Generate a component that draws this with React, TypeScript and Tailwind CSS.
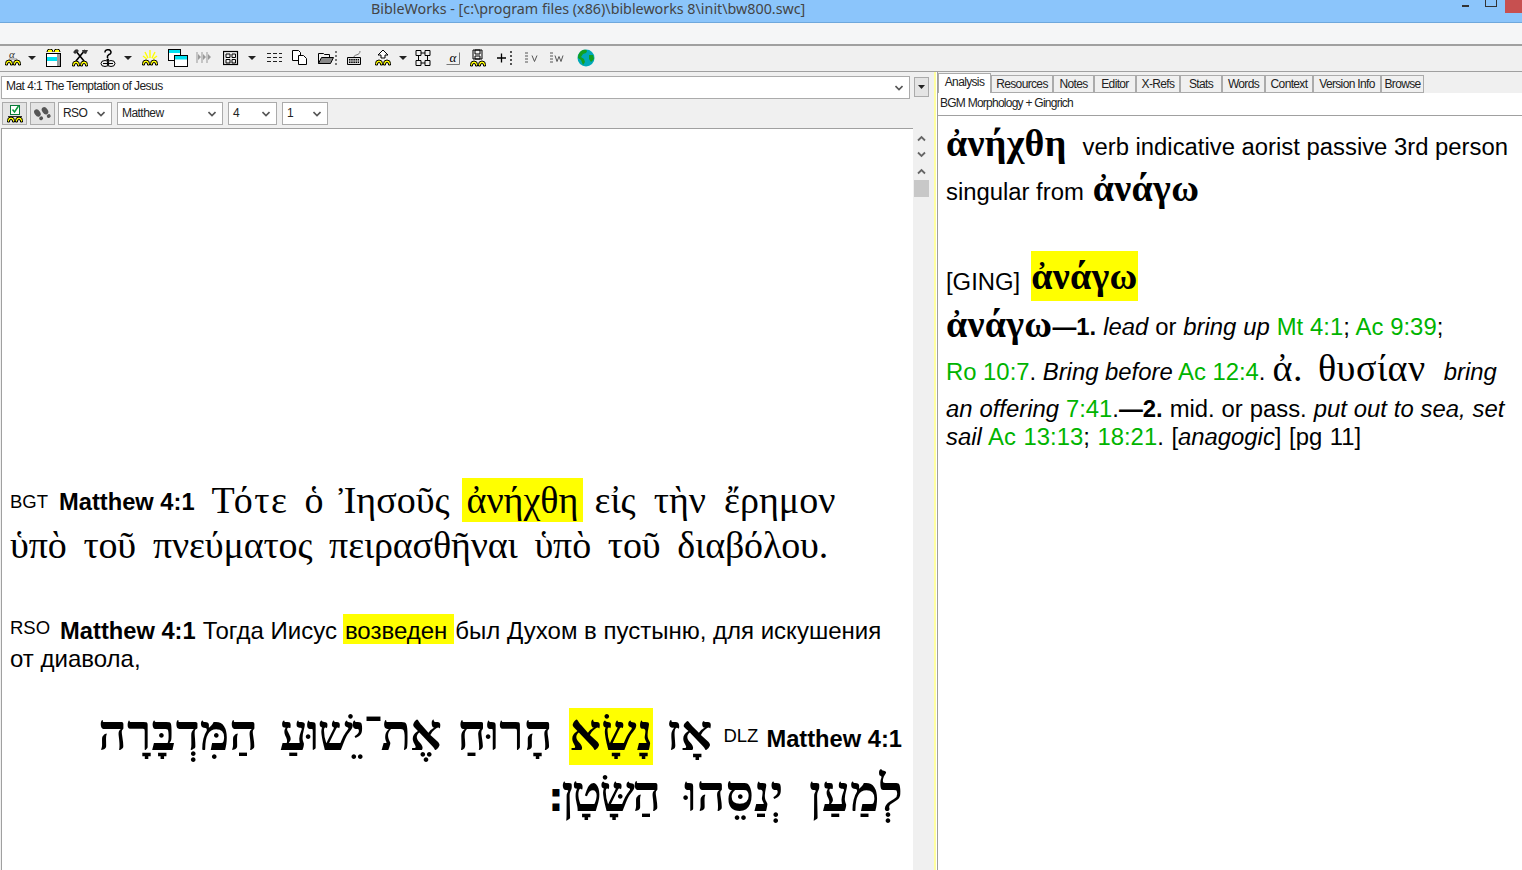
import type { ReactNode } from 'react'

const serif = '"Liberation Serif", "DejaVu Serif", serif'

function Gk({ children, className = '' }: { children: ReactNode; className?: string }) {
  return <span className={`font-['Liberation_Serif',serif] not-italic ${className}`}>{children}</span>
}

function Ref({ children }: { children: ReactNode }) {
  return <span className="text-[#00b400] not-italic">{children}</span>
}

function Arcs({ y = 11, x = 0 }: { y?: number; x?: number }) {
  return (
    <g transform={`translate(${x} ${y})`} fill="#ffff00" stroke="#000" strokeWidth="1">
      <path d="M.5 5V3.500a3 3 0 0 1 7 0V5h-2V4a1 1 0 0 0-3 0v1z" />
      <path d="M8.500 5V3.500a3 3 0 0 1 7 0V5h-2V4a1 1 0 0 0-3 0v1z" />
    </g>
  )
}

function Ico({ w = 16, ml, children }: { w?: number; ml: string; children: ReactNode }) {
  return (
    <svg width={w} height="18" viewBox={`0 0 ${w} 18`} className={`shrink-0 ${ml}`} fill="none" stroke="#000" strokeWidth="1">
      {children}
    </svg>
  )
}

function Caret({ ml }: { ml: string }) {
  return (
    <svg width="8" height="4" viewBox="0 0 8 4" className={`shrink-0 ${ml}`}>
      <path d="M0 0h8L4 4z" fill="#222" />
    </svg>
  )
}

function Toolbar() {
  return (
    <div className="h-[26px] shrink-0 bg-[#f0f0f0] border-b border-[#a0a0a0] flex items-center pb-[2px]">
      <Ico ml="ml-[5px]">
        <text x="4" y="9" fontSize="11" fontStyle="italic" fontFamily={serif} fill="#333" stroke="none">α</text>
        <path d="M4 10h8" stroke="#666" strokeWidth=".7" />
        <Arcs />
      </Ico>
      <Caret ml="ml-[7px]" />
      <Ico ml="ml-[10px]">
        <path d="M1 3a2.500 2.500 0 0 1 6 0M8 3a2.500 2.500 0 0 1 6 0" fill="#ffff00" />
        <rect x=".5" y="4.500" width="14" height="13" fill="#fff" />
        <rect x="1" y="8" width="10" height="4" fill="#00e0f0" stroke="none" />
        <rect x="11" y="5" width="3" height="12" fill="#999" stroke="none" />
      </Ico>
      <Ico ml="ml-[10px]">
        <path d="M3 1l9 11M13 1L4 12" strokeWidth="1.600" />
        <path d="M1 3l4-3 2 2-4 3zM10 1h6l-2 4-3-1z" fill="#333" stroke="none" />
        <Arcs y={12} />
      </Ico>
      <Ico ml="ml-[12px]">
        <path d="M5 3.500a3 2.500 0 1 1 4 2L7.500 7v2" strokeWidth="1.500" />
        <path d="M7 10h1.500v1.500H7z" fill="#000" />
        <ellipse cx="5" cy="14.500" rx="4" ry="3" />
        <ellipse cx="11" cy="14.500" rx="4" ry="3" />
        <path d="M3 14.500h10" />
      </Ico>
      <Caret ml="ml-[8px]" />
      <Ico ml="ml-[10px]">
        <path d="M8 1v8M3 3l3 6M13 3l-3 6M1 7l4 3M15 7l-4 3" stroke="#ffff00" strokeWidth="1.400" />
        <Arcs />
      </Ico>
      <Ico w={20} ml="ml-[10px]">
        <rect x=".5" y=".5" width="12" height="11" fill="#fff" />
        <rect x="1" y="1" width="11" height="3" fill="#00e0f0" stroke="none" />
        <rect x="6.500" y="6.500" width="13" height="11" fill="#fff" />
        <rect x="7" y="7" width="12" height="3.500" fill="#00e0f0" stroke="none" />
      </Ico>
      <Ico ml="ml-[8px]">
        <path d="M1 3v11M6 3v11M11 3v11" stroke="#999" />
        <path d="M2 5l3 3-3 3zM7 5l3 3-3 3zM12 5l3 3-3 3z" fill="#999" stroke="none" />
      </Ico>
      <Ico ml="ml-[11px]">
        <rect x=".5" y="2.500" width="14" height="13" strokeWidth="1.200" />
        <path d="M3 5h4v3.500H3zM9 5h3.500v3.500H9zM3 10.500h4V14H3zM9 10.500h3.500V14H9z" />
      </Ico>
      <Caret ml="ml-[9px]" />
      <Ico ml="ml-[10px]">
        <path d="M1 4.500h4M7 4.500h4M13 4.500h3M1 8.500h4M7 8.500h4M13 8.500h3M1 12.500h4M7 12.500h4M13 12.500h3" strokeWidth="1.200" stroke="#222" />
      </Ico>
      <Ico ml="ml-[10px]">
        <path d="M.5 1.500h6l2 2v8h-8z" fill="#fff" />
        <path d="M6.500 6.500h5l3 3v6h-8z" fill="#fff" />
      </Ico>
      <Ico w={20} ml="ml-[10px]">
        <path d="M.5 14.500v-10h5l1 1h5v3" />
        <path d="M.5 14.500l3-6h12l-3 6z" fill="#888" />
        <path d="M18 2v2M18 6v2M18 10v2M18 14v2" />
      </Ico>
      <Ico ml="ml-[8px]">
        <path d="M1.500 8.500h13v7h-13z" fill="#ddd" />
        <path d="M3 10.500h10M3 12h10M3 13.500h10" strokeDasharray="1.500 .7" strokeWidth="1.200" />
        <path d="M8 8c0-3 6-1 6-6" stroke="#777" />
      </Ico>
      <Ico ml="ml-[13px]">
        <path d="M8 1l5 5h-3v3H6V6H3z" fill="#fff" />
        <Arcs y={11} />
      </Ico>
      <Caret ml="ml-[8px]" />
      <Ico ml="ml-[8px]">
        <path d="M1 1.500h5v5H1zM10 1.500h5v5h-5zM1 11.500h5v5H1zM10 11.500h5v5h-5zM6 4h4M6 14h4M3.500 6.500v5M12.500 6.500v5" />
      </Ico>
      <Ico w={14} ml="ml-[15px]">
        <path d="M.5 15.500h13M13.500 3.500v12" stroke="#777" />
        <text x="3.500" y="13" fontSize="13" fontStyle="italic" fontFamily={serif} fill="#000" stroke="none">α</text>
      </Ico>
      <Ico ml="ml-[10px]">
        <path d="M3 1h9v9H3z" />
        <path d="M5 1h5v4H5zM5 7h5v3H5z" />
        <Arcs y={12} />
      </Ico>
      <Ico ml="ml-[10px]">
        <path d="M1 9h9M5.500 4.500v9" strokeWidth="1.300" />
        <path d="M15 2v2M15 6v2M15 10v2M15 14v2" strokeWidth="1.300" />
      </Ico>
      <Ico w={15} ml="ml-[12px]">
        <path d="M1 4h3M1 7h3M1 10h3M1 13h3" stroke="#555" />
        <path d="M8 6.500l2.500 6 2.500-6" stroke="#555" />
      </Ico>
      <Ico ml="ml-[10px]">
        <path d="M1 4h3M1 7h3M1 10h3M1 13h3" stroke="#555" />
        <path d="M6 6.500l2 6 2-5 2 5 2-6" stroke="#555" />
      </Ico>
      <svg width="18" height="18" viewBox="0 0 18 18" className="shrink-0 ml-[12px]">
        <circle cx="9" cy="9" r="8.500" fill="#00a8b8" />
        <path d="M6 1c4-1 5 1 3 3L6 5 4 8l3 2 1 3-2 3-2-5-3-2c0-4 2-7 5-8zM12 6l4 0 1 4-3 3-2-3z" fill="#12a020" />
      </svg>
    </div>
  )
}

function Chevron() {
  return (
    <svg width="8" height="6" viewBox="0 0 8 6">
      <path d="M.5 1l3.500 3.500L7.500 1" fill="none" stroke="#555" strokeWidth="1.600" />
    </svg>
  )
}

function Select({ label, w }: { label: string; w: string }) {
  return (
    <div className={`${w} h-[23px] shrink-0 bg-white border border-[#ababab] flex items-center justify-between pl-1 pr-[6px] text-[12px] tracking-[-0.55px] text-[#222]`}>
      <span className="pb-[2px]">{label}</span>
      <Chevron />
    </div>
  )
}

function ScrollArrow({ down, className = '' }: { down?: boolean; className?: string }) {
  return (
    <svg width="9" height="7" viewBox="0 0 9 7" className={className}>
      <path d={down ? 'M1 1.500l3.500 3.500L8 1.500' : 'M1 5.500L4.500 2 8 5.500'} fill="none" stroke="#666" strokeWidth="1.800" />
    </svg>
  )
}

const tabs = [
  { label: 'Resources', w: 'w-[62px]' },
  { label: 'Notes', w: 'w-[41px]' },
  { label: 'Editor', w: 'w-[42px]' },
  { label: 'X-Refs', w: 'w-[44px]' },
  { label: 'Stats', w: 'w-[42px]' },
  { label: 'Words', w: 'w-[43px]' },
  { label: 'Context', w: 'w-[48px]' },
  { label: 'Version Info', w: 'w-[68px]' },
  { label: 'Browse', w: 'w-[43px]' },
]

export default function App() {
  return (
    <div className="w-[1522px] h-[870px] overflow-hidden bg-white flex flex-col font-['Liberation_Sans',sans-serif] text-black">
      <div className="h-[23px] shrink-0 bg-[#8bc5fb] border-b border-[#6fa8dc] relative pl-[371px] font-['Noto_Sans',sans-serif] text-[14.3px] leading-[17px] text-[#444]">
        BibleWorks - [c:\program files (x86)\bibleworks 8\init\bw800.swc]
        <div className="absolute top-0 right-0 w-[17px] h-[13px] bg-[#c75050]" />
        <div className="absolute top-0 right-[25px] w-[12px] h-[7px] border border-[#333] border-t-0" />
        <div className="absolute top-[5px] right-[53px] w-[7px] h-[2px] bg-[#333]" />
      </div>
      <div className="h-[23px] shrink-0 bg-[#f5f6f7] border-b-2 border-[#a0a0a0]" />
      <Toolbar />
      <div className="flex-1 flex min-h-0">
        <div className="w-[934px] shrink-0 bg-[#f0f0f0] flex flex-col">
          <div className="flex items-start h-[30px] pt-[4px] pl-[1px]">
            <div className="w-[909px] h-[23px] bg-white border border-[#ababab] flex items-center justify-between pl-1 pr-[6px] text-[12px] tracking-[-0.55px] text-[#222]">
              <span className="pb-[3px]">Mat 4:1 The Temptation of Jesus</span>
              <Chevron />
            </div>
            <div className="ml-[4px] mt-[1px] w-[15px] h-[20px] border border-[#ababab] bg-[#e4e4e4] flex items-center justify-center">
              <svg width="7" height="4" viewBox="0 0 7 4"><path d="M0 0h7L3.500 4z" fill="#222" /></svg>
            </div>
          </div>
          <div className="flex items-start h-[26px] pl-[2px]">
            <div className="w-[25px] h-[23px] border border-[#ababab] bg-[#e4e4e4] flex items-center justify-center">
              <svg width="16" height="18" viewBox="0 0 16 18" fill="none" stroke="#000">
                <rect x="3.500" y=".5" width="9" height="9" fill="#fff" stroke="#0a7a3a" />
                <path d="M5.500 4.500l2 2.500 4-6" stroke="#0a9a3a" strokeWidth="1.500" />
                <path d="M1 11.500h14" strokeWidth=".8" />
                <Arcs y={12} />
              </svg>
            </div>
            <div className="ml-[3px] w-[25px] h-[23px] border border-[#ababab] bg-[#e4e4e4] flex items-center justify-center">
              <svg width="18" height="18" viewBox="0 0 18 18">
                <g fill="#555" transform="rotate(-35 9 9)">
                  <ellipse cx="5" cy="5" rx="2.800" ry="4" />
                  <ellipse cx="5" cy="11.500" rx="2" ry="1.800" />
                  <ellipse cx="12.500" cy="7.500" rx="2.800" ry="4" />
                  <ellipse cx="12.500" cy="14" rx="2" ry="1.800" />
                </g>
              </svg>
            </div>
            <div className="ml-[3px] flex items-center gap-[5px]">
              <Select label="RSO" w="w-[54px]" />
              <Select label="Matthew" w="w-[106px]" />
              <Select label="4" w="w-[49px]" />
              <Select label="1" w="w-[46px]" />
            </div>
          </div>
          <div className="flex-1 flex min-h-0 pl-[1px]">
            <div className="w-[912px] bg-white border-l border-t border-[#a0a0a0] pl-[8px] pt-[349px] text-[24px] leading-[28px]">
              <div className="h-[44px] flex items-center whitespace-nowrap">
                <span className="text-[18.5px] mt-[4px] mr-[11px]">BGT</span>
                <span className="font-bold mt-[3px] text-[23.7px]">Matthew 4:1</span>
                <Gk className="ml-[17px] text-[38px] leading-[44px] tracking-[1.500px]">Τότε</Gk>
                <Gk className="ml-[16px] text-[38px] leading-[44px] [word-spacing:5.500px]">ὁ Ἰησοῦς</Gk>
                <Gk className="ml-[12px] text-[38px] leading-[44px] bg-[#ffff00] px-[5px]">ἀνήχθη</Gk>
                <Gk className="ml-[11px] text-[38px] leading-[44px] [word-spacing:8.500px]">εἰς τὴν ἔρημον</Gk>
              </div>
              <div className="h-[46px] flex items-center whitespace-nowrap">
                <Gk className="text-[38px] leading-[46px] [word-spacing:7.500px] tracking-[-0.15px]">ὑπὸ τοῦ πνεύματος πειρασθῆναι ὑπὸ τοῦ διαβόλου.</Gk>
              </div>
              <div className="mt-[46px] flex items-baseline whitespace-nowrap h-[31px]">
                <span className="text-[18.5px] relative -top-[5px] mr-[10px]">RSO</span>
                <span className="font-bold text-[23.7px]">Matthew 4:1</span>
                <span className="ml-[7px]">Тогда Иисус</span>
                <span className="ml-[6px] bg-[#ffff00] pl-[2px] pr-[7px] h-[30px] leading-[34px]">возведен</span>
                <span className="ml-[1px]">был Духом в пустыню, для искушения</span>
              </div>
              <div>от диавола,</div>
              <div className="mt-[35px] flex items-start justify-end pr-[11px] h-[57px] whitespace-nowrap">
                <div dir="rtl" className="font-['Liberation_Serif',serif] font-bold text-[50px] leading-[50px] [word-spacing:4px]">
                  אָז <span className="inline-block bg-[#ffff00] h-[57px] leading-[50px] -mr-[3px]">נָשָׂא</span> הָרוּחַ <span className="tracking-[-1.500px]">אֶת־יֵשׁוּעַ</span> <span className="mr-[5px]">הַמִּדְבָּרָה</span>
                </div>
                <span className="text-[18.5px] ml-[11px] mt-[14px]">DLZ</span>
                <span className="font-bold ml-[8px] mt-[17px] text-[23.7px]">Matthew 4:1</span>
              </div>
              <div dir="rtl" className="pr-[10px] font-['Liberation_Serif',serif] font-bold text-[50px] leading-[58px] [word-spacing:13px] whitespace-nowrap">
                לְמַעַן יְנַסֵּהוּ <span className="tracking-[-2.500px]">הַשָּׂטָן</span><span className="font-['DejaVu_Sans',sans-serif] text-[40px] -mr-[2px]">׃</span>
              </div>
            </div>
            <div className="w-[16px] flex flex-col items-center">
              <ScrollArrow className="mt-[7px]" />
              <ScrollArrow down className="mt-[9px]" />
              <ScrollArrow className="mt-[10px]" />
              <div className="w-[15px] h-[17px] bg-[#c8c8c8] mt-[5px]" />
            </div>
          </div>
        </div>
        <div className="w-[2px] shrink-0 bg-[#ffffa0]" />
        <div className="w-[1px] shrink-0 bg-white" />
        <div className="flex-1 flex flex-col border-l border-[#a0a0a0] min-w-0">
          <div className="flex items-end h-[21px] bg-[#f0f0f0] text-[12px] tracking-[-0.65px] text-[#222]">
            <div className="w-[53px] h-[20px] bg-white border border-b-0 border-[#ababab] text-center leading-[17px]">Analysis</div>
            {tabs.map(t => (
              <div key={t.label} className={`${t.w} h-[18px] shrink-0 border border-[#ababab] bg-[#f0f0f0] text-center leading-[16px]`}>{t.label}</div>
            ))}
          </div>
          <div className="h-[23px] border-b border-[#a0a0a0] pl-[2px] text-[12px] leading-[21px] tracking-[-0.75px] text-[#222]">BGM Morphology + Gingrich</div>
          <div className="pl-[8px] text-[23.85px] whitespace-nowrap">
            <div className="h-[52px] flex items-end">
              <Gk className="text-[38px] leading-[46px] font-bold tracking-[0.3px] mb-[2px]">ἀνήχθη</Gk>
              <span className="ml-[16px] mb-[3px]">verb indicative aorist passive 3rd person</span>
            </div>
            <div className="h-[45px] flex items-end">
              <span className="mb-[3px]">singular from</span>
              <Gk className="ml-[9px] text-[38px] leading-[46px] font-bold tracking-[0.3px] mb-[2px]">ἀνάγω</Gk>
            </div>
            <div className="mt-[38px] h-[50px] flex items-center">
              <span className="mt-[12px]">[GING]</span>
              <Gk className="ml-[11px] bg-[#ffff00] text-[38px] leading-[50px] font-bold tracking-[0.3px]">ἀνάγω</Gk>
            </div>
            <div className="h-[48px] flex items-end">
              <Gk className="text-[38px] leading-[46px] font-bold tracking-[0.3px] mb-[2px]">ἀνάγω</Gk>
              <span className="mb-[4px] [word-spacing:0.3px]">
                <b>—1.</b> <i>lead</i> or <i>bring up</i> <Ref>Mt 4:1</Ref>; <Ref>Ac 9:39</Ref>;
              </span>
            </div>
            <div className="h-[44px] flex items-end">
              <span className="mb-[3px]">
                <Ref>Ro 10:7</Ref>. <i>Bring before</i> <Ref>Ac 12:4</Ref>.
              </span>
              <Gk className="ml-[7px] mb-[3px] text-[38px] leading-[44px] [word-spacing:5px] tracking-[0.5px]">ἀ. θυσίαν</Gk>
              <i className="ml-[18px] mb-[3px]">bring</i>
            </div>
            <div className="h-[31px] leading-[31px] [word-spacing:0.3px]">
              <i>an offering</i> <Ref>7:41</Ref>.<b>—2.</b> mid. or pass. <i>put out to sea, set</i>
            </div>
            <div className="h-[26px] leading-[26px] [word-spacing:1px]">
              <i>sail</i> <Ref>Ac 13:13</Ref>; <Ref>18:21</Ref>. [<i>anagogic</i>] [pg 11]
            </div>
          </div>
        </div>
      </div>
    </div>
  )
}
